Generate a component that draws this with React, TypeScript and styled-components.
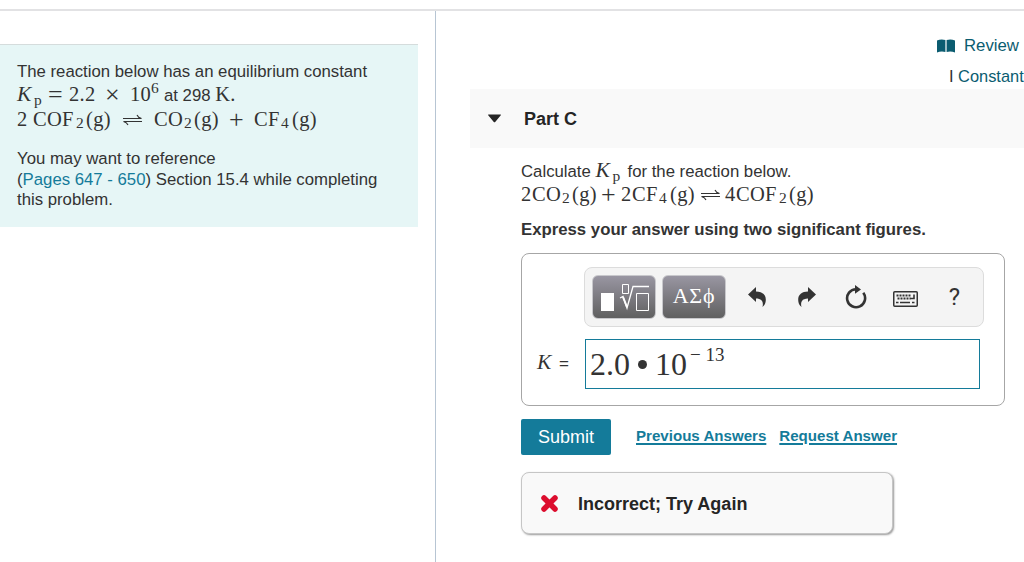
import React, { useState } from "react";
import styled, { createGlobalStyle } from "styled-components";

const colors = {
  primary: "#147b9a",
  darkTeal: "#0b5c70",
  text: "#333333",
  heading: "#252525",
  panel: "#e6f6f6",
  lightgray: "#f9f9f9",
  error: "#dc0d2e",
};

const GlobalStyle = createGlobalStyle`
  * {
    box-sizing: border-box;
  }

  body {
    margin: 0;
    overflow: hidden;
    background: white;
    color: ${colors.text};
    font-family: "Liberation Sans", Arial, sans-serif;
    font-size: 16.75px;
  }
`;

const PageContainer = styled.div`
  display: flex;
  height: 553px;
  margin-top: 9px;
  border-top: 2px solid #e2e2e4;
`;

const Sidebar = styled.aside`
  flex: none;
  width: 436px;
  padding-top: 33px;
  border-right: 1px solid #b7c5d3;
`;

const Introduction = styled.section`
  width: 418px;
  height: 183px;
  padding: 16px 0 0 17px;
  background: ${colors.panel};
  border-top: 1px solid #d5dcdc;
`;

const Line = styled.div<{ $height?: number }>`
  display: flex;
  align-items: baseline;
  height: ${({ $height }) => $height ?? 21}px;
  line-height: ${({ $height }) => $height ?? 21}px;
  white-space: pre;
`;

const Reference = styled.div`
  margin-top: 16px;
`;

const PageLink = styled.a`
  color: ${colors.primary};
`;

const Term = styled.span<{ $width?: number }>`
  flex: none;
  width: ${({ $width }) => ($width ? `${$width}px` : "auto")};
  font-family: "Liberation Serif", "Times New Roman", serif;
  font-size: 20.5px;
  letter-spacing: 0.3px;
`;

const Variable = styled(Term)`
  font-style: italic;
  font-size: 21.5px;
  letter-spacing: 0;
`;

const Operator = styled(Term)`
  font-size: 26px;
  line-height: 1px;
  position: relative;
  top: 2px;
`;

const Script = styled.span<{ $shift: number; $width?: number }>`
  flex: none;
  position: relative;
  top: ${({ $shift }) => $shift}px;
  width: ${({ $width }) => ($width ? `${$width}px` : "auto")};
  font-family: "Liberation Serif", "Times New Roman", serif;
  font-size: 15.5px;
`;

const HarpoonIcon = styled.svg<{ $gap: number }>`
  flex: none;
  width: 19px;
  height: 13px;
  margin-right: ${({ $gap }) => $gap}px;
`;

const Content = styled.main`
  flex: 1;
  min-width: 0;
  padding: 24px 0 0 34px;
`;

const ResourceRow = styled.div<{ $left: number }>`
  display: flex;
  align-items: center;
  height: 22px;
  padding-left: ${({ $left }) => $left}px;
  color: ${colors.darkTeal};
  white-space: pre;

  & + & {
    margin: 8px 0 2px;
    font-size: 16.4px;
  }
`;

const BookIcon = styled.svg`
  width: 18px;
  height: 14px;
  margin-right: 9px;
`;

const Separator = styled.span`
  color: ${colors.text};
`;

const PartHeader = styled.header`
  display: flex;
  align-items: center;
  height: 59px;
  padding-left: 18px;
  background: ${colors.lightgray};
`;

const PartTitle = styled.h2`
  margin: 0 0 0 23px;
  padding-top: 2px;
  color: ${colors.heading};
  font-size: 18px;
`;

const PartBody = styled.div`
  padding: 10px 0 0 51px;
`;

const Instruction = styled.p`
  margin: 13px 0 13px;
  font-weight: bold;
  line-height: 21px;
`;

const AnswerBox = styled.div`
  width: 484px;
  height: 153px;
  padding: 13px 0 0 14px;
  border: 1px solid #a6a6a6;
  border-radius: 8px;
`;

const Toolbar = styled.div`
  display: flex;
  align-items: center;
  width: 400px;
  height: 60px;
  margin-left: 48px;
  padding: 0 0 1px 7px;
  background: #f4f4f4;
  border: 1px solid #dcdcdc;
  border-radius: 8px;
`;

const PaletteButton = styled.button`
  display: flex;
  align-items: center;
  justify-content: center;
  width: 64px;
  height: 44px;
  margin-right: 6px;
  padding: 0 0 1px;
  background: linear-gradient(#9996a2, #606060);
  border: 1px solid #c8c8cc;
  border-radius: 6px;
  color: white;
  font-family: "Liberation Serif", serif;
  font-size: 22px;
  letter-spacing: 0.8px;
`;

const TemplateIcon = styled.svg`
  width: 50px;
  height: 29px;
  margin-left: 2px;
`;

const ToolButton = styled.button<{ $width: number }>`
  display: flex;
  align-items: center;
  justify-content: center;
  width: ${({ $width }) => $width}px;
  height: 43px;
  padding: 0;
  background: none;
  border: none;
  color: ${colors.text};
  font-family: Roboto, sans-serif;
  font-size: 24px;
`;

const KeyboardIcon = styled.svg`
  width: 25px;
  height: 16px;
  margin-top: 5px;
`;

const AnswerRow = styled.div`
  display: flex;
  align-items: center;
  margin-top: 12px;
`;

const AnswerLabel = styled.div`
  display: flex;
  align-items: baseline;
  width: 49px;
  padding: 0 0 3px 1px;
`;

const Equals = styled.span`
  font-size: 17px;
`;

const AnswerInput = styled.div`
  display: flex;
  align-items: baseline;
  width: 395px;
  height: 50px;
  padding-left: 4px;
  border: 1px solid ${colors.primary};
  font-family: "Liberation Serif", "Times New Roman", serif;
  font-size: 32px;
  line-height: 49px;
  white-space: pre;
`;

const Bullet = styled.span`
  width: 9px;
  height: 9px;
  margin: 0 8px;
  align-self: center;
  border-radius: 50%;
  background: ${colors.text};
`;

const Exponent = styled.span`
  position: relative;
  top: -14px;
  margin-left: 3px;
  font-size: 19px;
  line-height: 1;
`;

const Actions = styled.div`
  display: flex;
  align-items: center;
  margin-top: 13px;
`;

const SubmitButton = styled.button`
  width: 90px;
  height: 36px;
  margin-right: 25px;
  padding: 0;
  background-color: ${colors.primary};
  color: white;
  border: none;
  border-radius: 2px;
  font-family: inherit;
  font-size: 18px;
`;

const ActionLink = styled.a`
  margin-right: 13px;
  padding-bottom: 3px;
  color: ${colors.primary};
  font-size: 15.1px;
  font-weight: bold;
  text-decoration: underline;
  text-decoration-thickness: 1.5px;
  text-underline-offset: 2px;
`;

const Feedback = styled.div`
  display: flex;
  align-items: center;
  width: 372px;
  height: 62px;
  margin-top: 17px;
  padding: 1px 0 0 18px;
  background: ${colors.lightgray};
  border: 1px solid #c6c6c6;
  border-radius: 8px;
  box-shadow: 1px 1px 2px #999;
  color: ${colors.heading};
  font-size: 18px;
  font-weight: bold;
`;

const FeedbackText = styled.span`
  padding-top: 2px;
`;

const CrossIcon = styled.svg`
  width: 19px;
  height: 19px;
  margin-right: 19px;
`;

const Harpoons = ({ gap }: { gap: number }) => (
  <HarpoonIcon $gap={gap} viewBox="0 0 19 13" fill="none" stroke={colors.text}>
    <path d="M0 5.500H18.500Q15 4.500 14 2M19 8.500H.5Q4 9.500 5 12" strokeWidth="1.100" />
  </HarpoonIcon>
);

const App: React.FC = () => {
  const [expanded, setExpanded] = useState(true);

  return (
    <>
      <GlobalStyle />
      <PageContainer>
        <Sidebar>
          <Introduction>
            <Line>The reaction below has an equilibrium constant</Line>
            <Line $height={24}>
              <Variable $width={17}>K</Variable>
              <Script $shift={4} $width={14}>p</Script>
              <Operator $width={21}>=</Operator>
              <Term $width={36}>2.2</Term>
              <Operator $width={25}>×</Operator>
              <Term $width={21}>10</Term>
              <Script $shift={-8} $width={13}>6</Script>
              <span>at 298 </span>
              <Term>K.</Term>
            </Line>
            <Line $height={26}>
              <Term $width={16}>2</Term>
              <Term $width={43}>COF</Term>
              <Script $shift={2} $width={10}>2</Script>
              <Term $width={37}>(g)</Term>
              <Harpoons gap={12} />
              <Term $width={30}>CO</Term>
              <Script $shift={2} $width={10}>2</Script>
              <Term $width={35}>(g)</Term>
              <Operator $width={25}>+</Operator>
              <Term $width={27}>CF</Term>
              <Script $shift={2} $width={11}>4</Script>
              <Term>(g)</Term>
            </Line>
            <Reference>
              <Line>You may want to reference</Line>
              <Line>
                (<PageLink>Pages 647 - 650</PageLink>) Section 15.4 while completing
              </Line>
              <Line $height={20}>this problem.</Line>
            </Reference>
          </Introduction>
        </Sidebar>

        <Content>
          <ResourceRow $left={467}>
            <BookIcon viewBox="0 0 18 14" fill={colors.darkTeal}>
              <path d="M0 1.500Q4-.3 8.400 1v12Q4 12 0 13.500zM9.600 1Q14-.3 18 1.500v12Q14 12 9.600 13z" />
            </BookIcon>
            Review
          </ResourceRow>
          <ResourceRow $left={479}>
            <Separator>I </Separator>Constant
          </ResourceRow>

          <PartHeader onClick={() => setExpanded(!expanded)}>
            <svg width="13" height="9" viewBox="0 0 13 9" fill={colors.heading}>
              <path d="M.5 .5h12a.5.5 0 0 1 .3.8L7.2 8a1 1 0 0 1-1.4 0L.2 1.3a.5.5 0 0 1 .3-.8z" />
            </svg>
            <PartTitle>Part C</PartTitle>
          </PartHeader>

          {expanded && (
            <PartBody>
              <Line $height={24}>
                <span>Calculate </span>
                <Variable $width={17}>K</Variable>
                <Script $shift={4} $width={15}>p</Script>
                <span>for the reaction below.</span>
              </Line>
              <Line $height={24}>
                <Term $width={11}>2</Term>
                <Term $width={30}>CO</Term>
                <Script $shift={2} $width={10}>2</Script>
                <Term $width={29}>(g)</Term>
                <Operator $width={20}>+</Operator>
                <Term $width={11}>2</Term>
                <Term $width={27}>CF</Term>
                <Script $shift={2} $width={11}>4</Script>
                <Term $width={31}>(g)</Term>
                <Harpoons gap={5} />
                <Term $width={11}>4</Term>
                <Term $width={43}>COF</Term>
                <Script $shift={2} $width={10}>2</Script>
                <Term>(g)</Term>
              </Line>
              <Instruction>
                Express your answer using two significant figures.
              </Instruction>

              <AnswerBox>
                <Toolbar>
                  <PaletteButton aria-label="Templates">
                    <TemplateIcon viewBox="0 0 50 29" fill="none" stroke="white">
                      <path d="M1 11h13v18H1z" fill="white" stroke="none" />
                      <path d="M22.500 2.500h6v9h-6zM36.500 11.500h12v17h-12z" />
                      <path d="M20 16l3-1.500 4 11.500 6-21.500H49" strokeWidth="1.300" />
                      <path d="M23 15l4 10" strokeWidth="2" />
                    </TemplateIcon>
                  </PaletteButton>
                  <PaletteButton>ΑΣϕ</PaletteButton>
                  <ToolButton $width={50} aria-label="Undo">
                    <svg width="18" height="20" viewBox="0 0 18 20" fill={colors.text}>
                      <path d="M0 7.500L8 0v4.500c6 0 10 3 9.800 8.500-.1 3-1 5-3.300 7 1.200-5-.5-8.500-6.500-8.500V15z" />
                    </svg>
                  </ToolButton>
                  <ToolButton $width={49} aria-label="Redo">
                    <svg width="18" height="20" viewBox="0 0 18 20" fill={colors.text}>
                      <path d="M18 7.500L10 0v4.500C4 4.500 0 7.500.2 13c.1 3 1 5 3.300 7-1.200-5 .5-8.500 6.500-8.500V15z" />
                    </svg>
                  </ToolButton>
                  <ToolButton $width={49} aria-label="Reset">
                    <svg width="22" height="24" viewBox="0 0 22 24" fill="none" stroke={colors.text}>
                      <path d="M18.300 7.800A9 9 0 1 1 11 4.200" strokeWidth="2.600" />
                      <path d="M10 0l6 4.400-6 4.300z" fill={colors.text} stroke="none" />
                    </svg>
                  </ToolButton>
                  <ToolButton $width={50} aria-label="Keyboard shortcuts">
                    <KeyboardIcon viewBox="0 0 25 16" fill="none" stroke={colors.text}>
                      <rect x=".75" y=".75" width="23.500" height="14.500" rx="1" strokeWidth="1.500" />
                      <path d="M3.500 4.500h15M4.500 7.500h13" strokeWidth="2" strokeDasharray="2 1" />
                      <path d="M3 11.500h2.500M7 11.500h10M19 11.500h2.500M21 3.500v4h-4" strokeWidth="1.600" />
                    </KeyboardIcon>
                  </ToolButton>
                  <ToolButton $width={49}>?</ToolButton>
                </Toolbar>
                <AnswerRow>
                  <AnswerLabel>
                    <Variable $width={22}>K</Variable>
                    <Equals>=</Equals>
                  </AnswerLabel>
                  <AnswerInput>
                    2.0<Bullet />10<Exponent>− 13</Exponent>
                  </AnswerInput>
                </AnswerRow>
              </AnswerBox>

              <Actions>
                <SubmitButton type="button">Submit</SubmitButton>
                <ActionLink>Previous Answers</ActionLink>
                <ActionLink>Request Answer</ActionLink>
              </Actions>

              <Feedback>
                <CrossIcon viewBox="0 0 19 19" stroke={colors.error} strokeLinecap="round">
                  <path d="M4 4l11 11M15 4L4 15" strokeWidth="5.500" />
                </CrossIcon>
                <FeedbackText>Incorrect; Try Again</FeedbackText>
              </Feedback>
            </PartBody>
          )}
        </Content>
      </PageContainer>
    </>
  );
};

export default App;
